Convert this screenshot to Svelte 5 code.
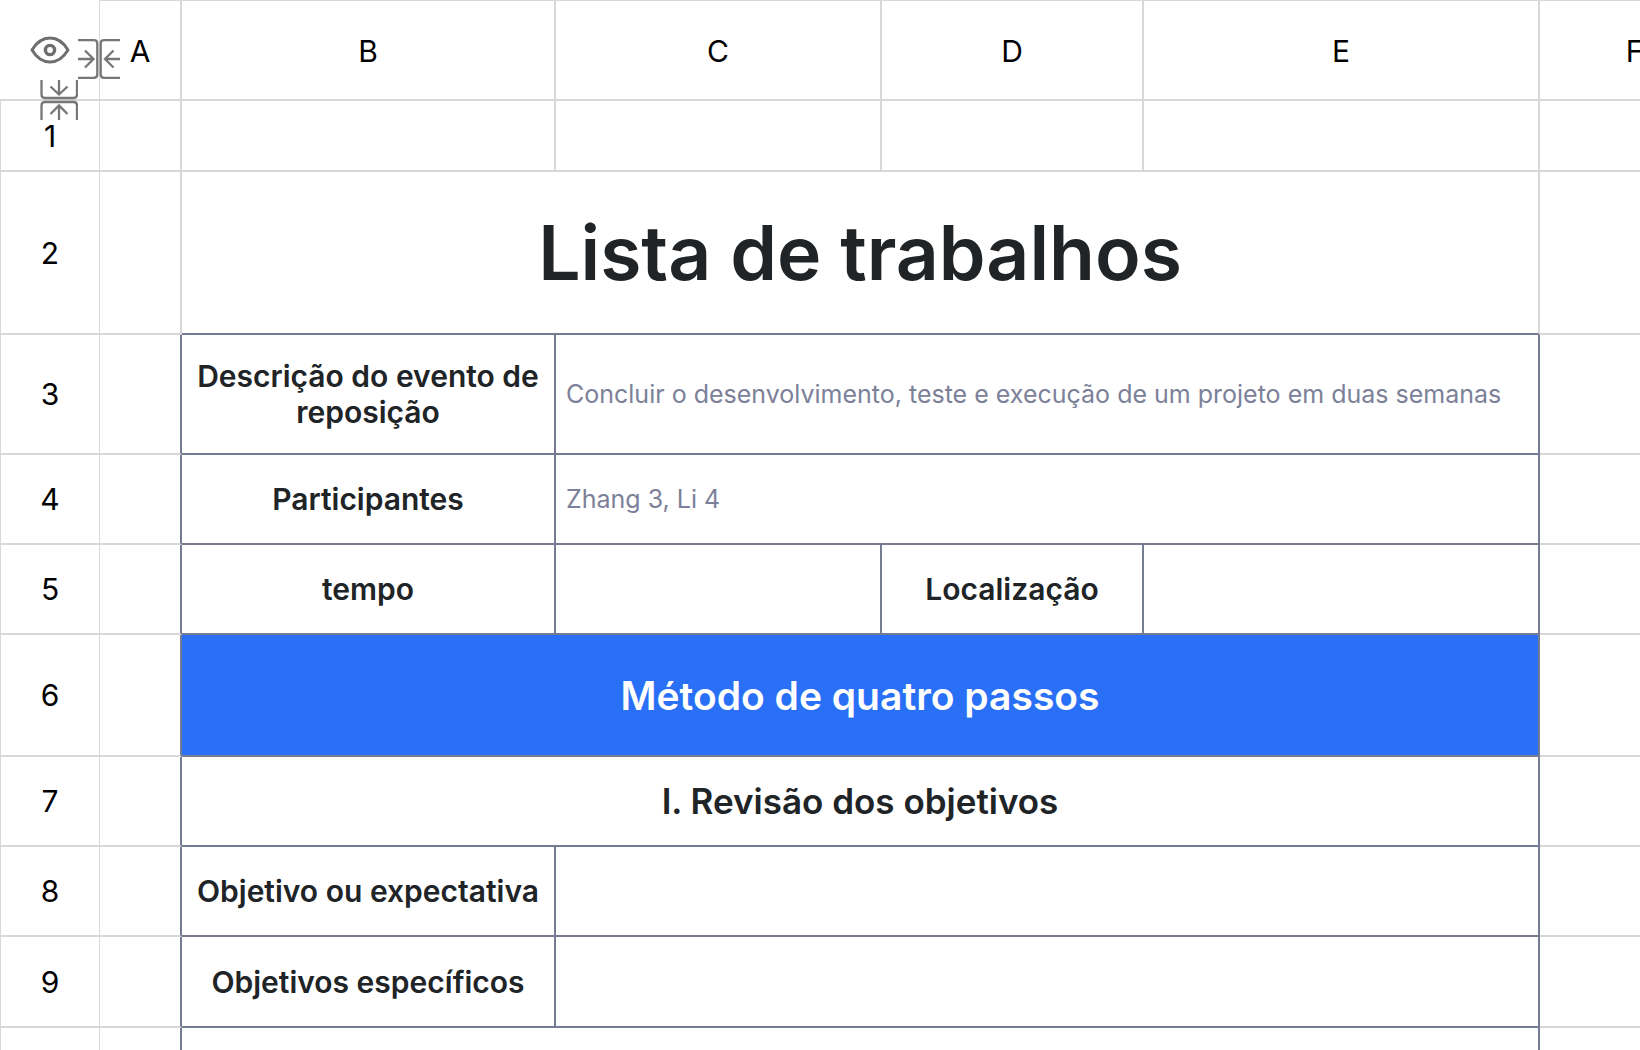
<script>
  // column widths and row heights include their closing grid line
  const HEAD_WIDTH = 100

  const columns = [
    { name: 'A', width: 82 },
    { name: 'B', width: 374 },
    { name: 'C', width: 326 },
    { name: 'D', width: 262 },
    { name: 'E', width: 396 },
    { name: 'F', width: 191 },
  ]

  // kinds: plain (default), title, label, value, banner, section
  const rows = [
    { height: 71, cells: [{}, {}, {}, {}, {}, {}] },
    { height: 163, cells: [{}, { kind: 'title', span: 4, text: 'Lista de trabalhos' }, {}] },
    {
      height: 120,
      cells: [
        { edge: true },
        { kind: 'label', text: 'Descrição do evento de reposição' },
        { kind: 'value', span: 3, text: 'Concluir o desenvolvimento, teste e execução de um projeto em duas semanas' },
        {},
      ],
    },
    {
      height: 90,
      cells: [{ edge: true }, { kind: 'label', text: 'Participantes' }, { kind: 'value', span: 3, text: 'Zhang 3, Li 4' }, {}],
    },
    {
      height: 90,
      cells: [
        { edge: true },
        { kind: 'label', text: 'tempo' },
        { kind: 'value' },
        { kind: 'label', text: 'Localização' },
        { kind: 'value' },
        {},
      ],
    },
    { height: 122, cells: [{ edge: true }, { kind: 'banner', span: 4, text: 'Método de quatro passos' }, {}] },
    { height: 90, cells: [{ edge: true }, { kind: 'section', span: 4, text: 'I. Revisão dos objetivos' }, {}] },
    {
      height: 90,
      cells: [{ edge: true }, { kind: 'label', text: 'Objetivo ou expectativa' }, { kind: 'value', span: 3 }, {}],
    },
    {
      height: 91,
      cells: [{ edge: true }, { kind: 'label', text: 'Objetivos específicos' }, { kind: 'value', span: 3 }, {}],
    },
    // trailing row, only its top is in view
    { height: 90, blank: true, cells: [{ edge: true }, { kind: 'section', span: 4 }, {}] },
  ]

  const tableWidth = columns.reduce((sum, c) => sum + c.width, HEAD_WIDTH)
</script>

<main class="sheet">
  <table style="width: {tableWidth}px">
    <colgroup>
      <col style="width: {HEAD_WIDTH}px" />
      {#each columns as col}
        <col style="width: {col.width}px" />
      {/each}
    </colgroup>
    <thead>
      <tr class="col-heads">
        <td class="corner">
          <button class="eye" aria-label="Mostrar">
            <svg width="40" height="28" viewBox="0 0 40 28" fill="none" stroke="currentColor" stroke-width="3">
              <path d="M2 14C6.500 6.500 12.500 2 20 2s13.500 4.500 18 12c-4.500 7.500-10.500 12-18 12S6.500 21.500 2 14Z" stroke-linejoin="round" />
              <circle cx="20" cy="14" r="4.600" stroke-width="3.400" />
            </svg>
          </button>
          <button class="handle handle-col" aria-label="Recolher colunas">
            <svg width="42" height="40" viewBox="0 0 42 40" fill="none" stroke="currentColor" stroke-width="2.300">
              <path d="M0 1.200h16q3.300 0 3.300 3.300v31q0 3.300-3.300 3.300H0M42 1.200H26q-3.300 0-3.300 3.300v31q0 3.300 3.300 3.300H42" />
              <path d="M0 20h16M7 11.500l8.500 8.500L7 28.500M42 20H27M35.500 11.500L27 20l8.500 8.500" />
            </svg>
          </button>
          <button class="handle handle-row" aria-label="Recolher linhas">
            <svg width="38" height="40" viewBox="0 0 38 40" fill="none" stroke="currentColor" stroke-width="2.300">
              <path d="M1.500 0v14.500q0 3.500 3.500 3.500h28.500q3.500 0 3.500-3.500V0M1.500 40V25.500Q1.500 22 5 22h28.500q3.500 0 3.500 3.500V40" />
              <path d="M19 0v14M10.500 6.500l8.500 8L27.500 6.500M19 40V26M10.500 34l8.500-8.500 8.500 8.500" />
            </svg>
          </button>
        </td>
        {#each columns as col}
          <th scope="col">{col.name}</th>
        {/each}
      </tr>
    </thead>
    <tbody>
      {#each rows as row, i}
        <tr style="height: {row.height}px">
          <th class="row-head" scope="row">{row.blank ? '' : i + 1}</th>
          {#each row.cells as cell}
            <td class={cell.kind ?? 'plain'} class:edge={cell.edge} colspan={cell.span ?? 1}>{cell.text ?? ''}</td>
          {/each}
        </tr>
      {/each}
    </tbody>
  </table>
</main>

<style>
  :global(body) {
    margin: 0;
    background: #fff;
  }

  .sheet {
    --grid: #d8d8d8;
    --frame: #757b92;
    height: 100vh;
    overflow: hidden;
    font-family: Inter, 'Liberation Sans', sans-serif;
    color: #202427;
  }

  table {
    table-layout: fixed;
    border-collapse: separate;
    border-spacing: 0;
  }

  th,
  td {
    box-sizing: border-box;
    padding: 0 10px;
    border: 0 solid var(--grid);
    border-right-width: 2px;
    border-bottom-width: 2px;
    text-align: center;
    vertical-align: middle;
  }

  th {
    padding: 0;
    font-size: 30px;
    font-weight: 400;
    color: #000;
  }

  .col-heads {
    height: 101px;
  }

  .col-heads th {
    padding-top: 2px;
    border-top-width: 1px;
  }

  .corner {
    position: relative;
    padding: 0;
    border-right-width: 1px;
  }

  .row-head {
    border-left-width: 1px;
    border-right-width: 1px;
  }

  button {
    padding: 0;
    border: 0;
    background: none;
    color: #6e6e6e;
    cursor: pointer;
  }

  .eye {
    padding-top: 4px;
  }

  svg {
    display: block;
  }

  /* the handles straddle the header's grid lines */
  .handle {
    position: absolute;
    z-index: 1;
    color: #777;
  }

  .handle-col {
    top: 39px;
    left: 78px;
  }

  .handle-row {
    top: 80px;
    left: 40px;
  }

  .edge,
  .label,
  .value,
  .banner,
  .section {
    border-right-color: var(--frame);
  }

  .title,
  .label,
  .value,
  .banner,
  .section {
    border-bottom-color: var(--frame);
  }

  .title {
    font-size: 75px;
    font-weight: 600;
  }

  .label {
    font-size: 30px;
    font-weight: 600;
    line-height: 36px;
  }

  .value {
    font-size: 25px;
    text-align: left;
    color: #7c8199;
    white-space: nowrap;
  }

  .banner {
    font-size: 39px;
    font-weight: 600;
    background: #2a70f6;
    color: #fff;
  }

  .section {
    font-size: 35px;
    font-weight: 600;
  }
</style>
